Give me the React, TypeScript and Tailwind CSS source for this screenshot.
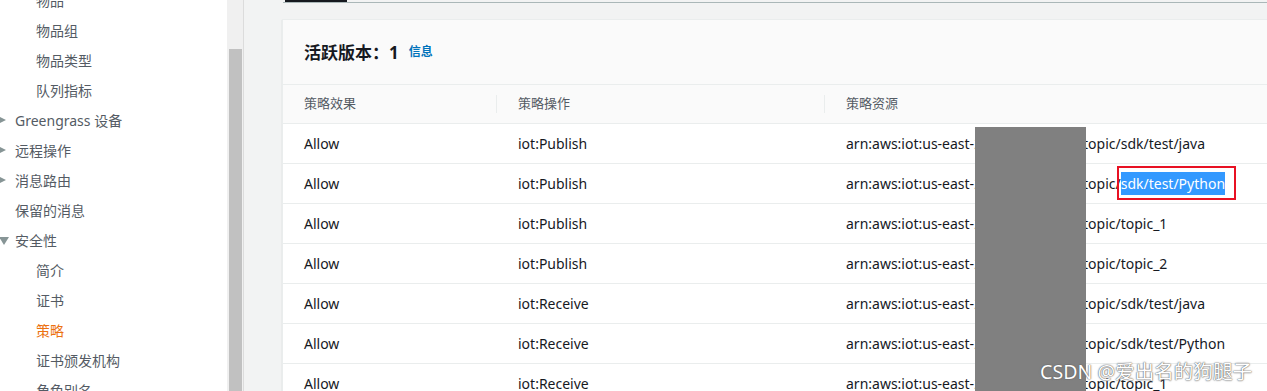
import React from 'react';

type NavItem = { label: string; level: 0 | 1; arrow?: 'right' | 'down'; active?: boolean };

const nav: NavItem[] = [
  { label: '物品', level: 1 },
  { label: '物品组', level: 1 },
  { label: '物品类型', level: 1 },
  { label: '队列指标', level: 1 },
  { label: 'Greengrass 设备', level: 0, arrow: 'right' },
  { label: '远程操作', level: 0, arrow: 'right' },
  { label: '消息路由', level: 0, arrow: 'right' },
  { label: '保留的消息', level: 0 },
  { label: '安全性', level: 0, arrow: 'down' },
  { label: '简介', level: 1 },
  { label: '证书', level: 1 },
  { label: '策略', level: 1, active: true },
  { label: '证书颁发机构', level: 1 },
  { label: '角色别名', level: 1 },
];

const rows = [
  { effect: 'Allow', action: 'iot:Publish', topic: 'sdk/test/java' },
  { effect: 'Allow', action: 'iot:Publish', topic: 'sdk/test/Python', marked: true },
  { effect: 'Allow', action: 'iot:Publish', topic: 'topic_1' },
  { effect: 'Allow', action: 'iot:Publish', topic: 'topic_2' },
  { effect: 'Allow', action: 'iot:Receive', topic: 'sdk/test/java' },
  { effect: 'Allow', action: 'iot:Receive', topic: 'sdk/test/Python' },
  { effect: 'Allow', action: 'iot:Receive', topic: 'topic_1' },
];

const font = { fontFamily: '"Noto Sans", "Noto Sans CJK SC", sans-serif' };

export default function App() {
  return (
    <div className="relative flex w-[1267px] h-[391px] overflow-hidden bg-[#f2f3f3]" style={font}>
      {/* 侧边栏 */}
      <div className="w-[227px] shrink-0 bg-white">
        <div className="mt-[-15px]">
          {nav.map((item, i) => (
            <div
              key={i}
              className={`h-[30px] flex items-center text-[14px] ${item.level === 1 ? 'pl-[36px]' : 'pl-[15px]'} ${item.active ? 'text-[#ec7211]' : 'text-[#545b64]'} relative`}
            >
              {item.arrow === 'right' && (
                <span className="absolute left-[-4px] w-0 h-0 border-y-[5px] border-y-transparent border-l-[10px] border-l-[#879596]" />
              )}
              {item.arrow === 'down' && (
                <span className="absolute left-[-1px] top-[12px] w-0 h-0 border-x-[5px] border-x-transparent border-t-[8px] border-t-[#879596]" />
              )}
              {item.label}
            </div>
          ))}
        </div>
      </div>

      {/* 滚动条 */}
      <div className="w-[17px] shrink-0 bg-[#f0f0f0] pt-[49px] pl-[2px] border-r border-[#dcdcdc]">
        <div className="w-[13px] h-full bg-[#c1c1c1]" />
      </div>

      {/* 主区域 */}
      <div className="flex-1 flex flex-col min-w-0">
        <div className="h-[3px] ml-[39px] border-b border-[#aab7b8] relative shrink-0">
          <div className="absolute left-[2px] top-0 w-[62px] h-[2px] bg-[#16191f]" />
        </div>
        <div className="ml-[38px] mt-[16px] flex-1 bg-[#fafafa] border-l border-t border-[#eaeded] shadow-[0_1px_1px_rgba(0,28,36,0.2)]">
          <div className="h-[65px] flex items-center pl-[21px] border-b border-[#eaeded]">
            <span className="text-[17px] font-bold text-[#16191f] leading-none">活跃版本：1</span>
            <span className="ml-[10px] text-[12px] font-bold text-[#0073bb]">信息</span>
          </div>
          <div className="h-[39px] flex items-center text-[13px] text-[#545b64] border-b border-[#eaeded]">
            <div className="w-[213px] pl-[21px]">策略效果</div>
            <div className="w-[328px] h-[18px] border-l border-[#eaeded] pl-[21px] flex items-center">策略操作</div>
            <div className="flex-1 h-[18px] border-l border-[#eaeded] pl-[21px] flex items-center">策略资源</div>
          </div>
          <div className="relative bg-white">
            {rows.map((r, i) => (
              <div key={i} className="h-[40px] flex items-center text-[14px] text-[#16191f] border-b border-[#eaeded]">
                <div className="w-[214px] pl-[21px]">{r.effect}</div>
                <div className="w-[328px] pl-[21px]">{r.action}</div>
                <div className="flex-1 pl-[21px] flex items-center whitespace-nowrap">
                  <span className="inline-block w-[237px] overflow-hidden">arn:aws:iot:us-east-2</span>
                  <span>topic/</span>
                  {r.marked ? (
                    <span className="relative">
                      <span className="bg-[#3399ff] text-white py-[2px]">{r.topic}</span>
                      <span className="absolute left-[-4px] right-[-11px] top-[-7px] bottom-[-6px] border-2 border-[#e81123]" />
                    </span>
                  ) : (
                    <span>{r.topic}</span>
                  )}
                </div>
              </div>
            ))}
            {/* 遮挡块 */}
            <div className="absolute left-[692px] top-[3px] w-[111px] h-[300px] bg-[#808080]" />
          </div>
        </div>
      </div>

      {/* 水印 */}
      <div className="absolute left-[1040px] top-[358px] text-[19.6px] leading-[27px] text-white [text-shadow:0_0_1px_#444,0_0_2px_#777] whitespace-nowrap">
        CSDN @爱出名的狗腿子
      </div>
    </div>
  );
}
